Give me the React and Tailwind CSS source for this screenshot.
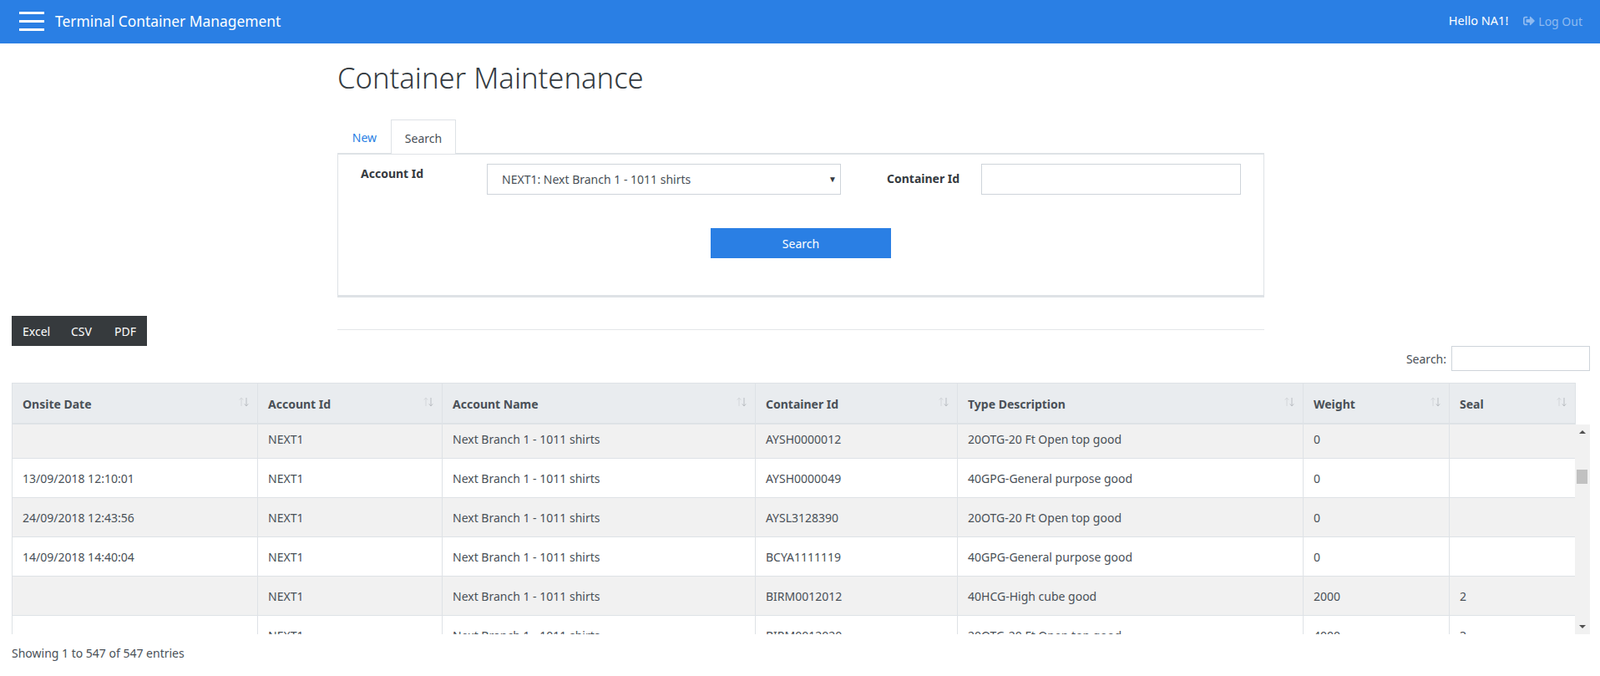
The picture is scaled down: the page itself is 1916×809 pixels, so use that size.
import { FaSignOutAlt } from 'react-icons/fa'

const COLUMNS = [
  { title: 'Onsite Date', width: 'w-[294px]' },
  { title: 'Account Id', width: 'w-[221px]' },
  { title: 'Account Name', width: 'w-[375px]' },
  { title: 'Container Id', width: 'w-[242px]' },
  { title: 'Type Description', width: 'w-[414px]' },
  { title: 'Weight', width: 'w-[175px]' },
  { title: 'Seal', width: 'w-[151px]' },
]

const ROWS = [
  ['', 'AYSH0000012', '20OTG-20 Ft Open top good', '0', ''],
  ['13/09/2018 12:10:01', 'AYSH0000049', '40GPG-General purpose good', '0', ''],
  ['24/09/2018 12:43:56', 'AYSL3128390', '20OTG-20 Ft Open top good', '0', ''],
  ['14/09/2018 14:40:04', 'BCYA1111119', '40GPG-General purpose good', '0', ''],
  ['', 'BIRM0012012', '40HCG-High cube good', '2000', '2'],
  ['', 'BIRM0012020', '20OTG-20 Ft Open top good', '4000', '3'],
]

function SortIcon() {
  return (
    <svg width="14" height="12" viewBox="0 0 14 12" className="absolute right-[9px] top-[16px]">
      <path d="M4 11V1.5M1.8 3.6 4 1l2.2 2.6" fill="none" stroke="#d3d6da" strokeWidth="1" />
      <path d="M10 1v9.5M7.8 8.4 10 11l2.2-2.6" fill="none" stroke="#b9bdc2" strokeWidth="1" />
    </svg>
  )
}

export default function App() {
  return (
    <div className="min-h-screen bg-white font-['Noto_Sans',sans-serif] text-[14px] text-[#495057]">
      <header className="flex h-[52px] items-center justify-between bg-[#2a7fe4] pl-[23px] pr-[21px] text-white">
        <div className="flex items-center gap-[13px]">
          <div className="flex w-[30px] flex-col gap-[7px]">
            <span className="h-[3px] bg-white" />
            <span className="h-[3px] bg-white" />
            <span className="h-[3px] bg-white" />
          </div>
          <span className="pb-[2px] text-[17.4px]">Terminal Container Management</span>
        </div>
        <div className="flex items-center gap-[18px] pb-[2px]">
          <span className="text-[14.5px]">Hello NA1!</span>
          <a className="flex items-center gap-[4px] text-[#8ebaf0]">
            <FaSignOutAlt size={14} />
            Log Out
          </a>
        </div>
      </header>

      <main className="mx-[404px] w-[1110px]">
        <h1 className="pt-[16px] pb-[25px] font-['Lato',sans-serif] text-[34.6px] leading-[50px] font-light text-[#343a40]">
          Container Maintenance
        </h1>
        <div className="flex h-[40px] pl-[1px]">
          <a className="flex w-[63px] items-center justify-center pt-[2px] text-[#2a7fe4]">New</a>
          <a className="relative z-10 flex h-[41px] w-[78px] items-center justify-center border border-b-0 border-[#dee2e6] bg-white pt-[2px]">
            Search
          </a>
        </div>
        <section className="h-[173px] border-2 border-[#dee2e6] border-b-[3px] border-l-[1px] border-r-[1px]">
          <div className="flex pt-[11px]">
            <label className="mt-[1px] ml-[27px] w-[151px] leading-[22px] font-bold text-[#343a40]">Account Id</label>
            <div className="flex h-[37px] w-[424px] items-center justify-between border border-[#ced4da] pr-[4px] pl-[17px]">
              <span>NEXT1: Next Branch 1 - 1011 shirts</span>
              <span className="text-[10px] text-[#343a40]">▼</span>
            </div>
            <label className="mt-[7px] ml-[55px] w-[113px] leading-[22px] font-bold text-[#343a40]">Container Id</label>
            <input className="h-[37px] w-[311px] border border-[#ced4da]" />
          </div>
          <div className="mt-[40px] flex justify-center">
            <button className="h-[36px] w-[216px] bg-[#2a7fe4] text-white">Search</button>
          </div>
        </section>
        <hr className="mt-[38px] border-[#e4e6e9]" />
      </main>

      <section className="mt-[-17px] pr-[12px] pl-[14px]">
        <div className="flex h-[36px] w-[162px] items-center bg-[#363a3d] pl-[13px] text-white">
          <span className="w-[58px]">Excel</span>
          <span className="w-[52px]">CSV</span>
          <span>PDF</span>
        </div>
        <div className="flex h-[30px] items-center justify-end">
          <label className="mr-[6px]">Search:</label>
          <input className="h-[30px] w-[166px] border border-[#ced4da]" />
        </div>
        <table className="mt-[14px] w-[1872px] table-fixed border-collapse">
          <thead>
            <tr className="h-[48px] bg-[#e9ecef]">
              {COLUMNS.map((col) => (
                <th
                  key={col.title}
                  className={`${col.width} relative border border-b-2 border-[#dee2e6] pt-[2px] pl-[12px] text-left font-bold`}
                >
                  {col.title}
                  <SortIcon />
                </th>
              ))}
            </tr>
          </thead>
        </table>
        <div className="flex">
          <div className="h-[251px] w-[1872px] overflow-hidden">
            <table className="mt-[-7px] w-[1872px] table-fixed border-collapse">
              <tbody>
                {ROWS.map((row, i) => (
                  <tr key={row[1]} className={`h-[47px] ${i % 2 === 0 ? 'bg-[#f1f1f1]' : 'bg-white'}`}>
                    <td className="w-[294px] border border-[#dee2e6] pt-[2px] pl-[12px]">{row[0]}</td>
                    <td className="w-[221px] border border-[#dee2e6] pt-[2px] pl-[12px]">NEXT1</td>
                    <td className="w-[375px] border border-[#dee2e6] pt-[2px] pl-[12px]">Next Branch 1 - 1011 shirts</td>
                    <td className="w-[242px] border border-[#dee2e6] pt-[2px] pl-[12px]">{row[1]}</td>
                    <td className="w-[414px] border border-[#dee2e6] pt-[2px] pl-[12px]">{row[2]}</td>
                    <td className="w-[175px] border border-[#dee2e6] pt-[2px] pl-[12px]">{row[3]}</td>
                    <td className="w-[151px] border border-[#dee2e6] pt-[2px] pl-[12px]">{row[4]}</td>
                  </tr>
                ))}
              </tbody>
            </table>
          </div>
          <div className="relative flex h-[251px] w-[18px] flex-col items-center justify-between bg-[#f1f1f1] py-[7px]">
            <span className="h-0 w-0 border-x-[4px] border-b-[4px] border-x-transparent border-b-[#505050]" />
            <span className="absolute top-[54px] left-[2px] h-[17px] w-[13px] bg-[#c1c1c1]" />
            <span className="h-0 w-0 border-x-[4px] border-t-[4px] border-x-transparent border-t-[#505050]" />
          </div>
        </div>
        <div className="pt-[13px] leading-[20px]">Showing 1 to 547 of 547 entries</div>
      </section>
    </div>
  )
}
